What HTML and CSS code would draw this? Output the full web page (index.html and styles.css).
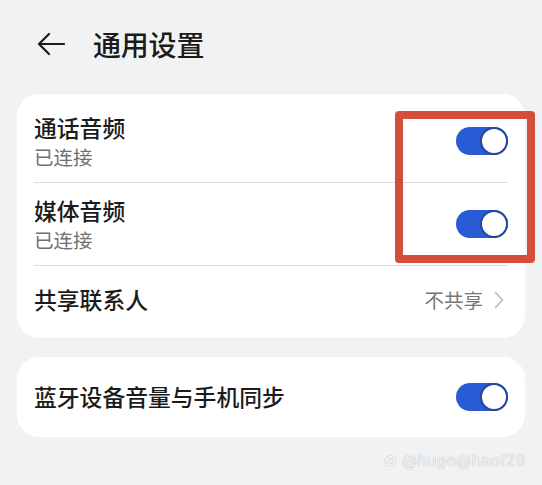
FILE: index.html
```html
<!DOCTYPE html>
<html lang="zh-CN">
<head>
<meta charset="utf-8">
<link rel="stylesheet" href="styles.css">
</head>
<body>
<div class="page">
  <header class="header">
    <svg class="back" width="28" height="24" viewBox="0 0 28 24"><path d="M12 2 L2 12 L12 22 M2 12 H27" fill="none" stroke="#1c1c1c" stroke-width="2.2" stroke-linecap="round" stroke-linejoin="round"/></svg>
    <h1 class="title">通用设置</h1>
  </header>

  <section class="card card-main">
    <div class="row row-two">
      <div class="texts">
        <div class="label">通话音频</div>
        <div class="sub">已连接</div>
      </div>
      <span class="toggle"><span class="knob"></span></span>
    </div>
    <div class="row row-two">
      <div class="texts">
        <div class="label">媒体音频</div>
        <div class="sub">已连接</div>
      </div>
      <span class="toggle"><span class="knob"></span></span>
    </div>
    <div class="row row-one last">
      <div class="label">共享联系人</div>
      <div class="value">不共享<svg class="chev" width="10" height="18" viewBox="0 0 10 18"><path d="M1.5 1.5 L8.5 9 L1.5 16.5" fill="none" stroke="#b8b8b8" stroke-width="1.6" stroke-linecap="round" stroke-linejoin="round"/></svg></div>
    </div>
  </section>

  <section class="card card-second">
    <div class="row row-single last">
      <div class="label">蓝牙设备音量与手机同步</div>
      <span class="toggle"><span class="knob"></span></span>
    </div>
  </section>

  <div class="highlight"></div>
  <div class="watermark">✿ @hugo@haof28</div>
</div>
</body>
</html>
```

FILE: styles.css
```css
html, body {
  margin: 0;
  padding: 0;
  background: #f1f2f4;
}
body {
  font-family: "Noto Sans CJK SC", "Noto Sans", sans-serif;
  color: #1b1b1b;
}
.page {
  position: relative;
  width: 542px;
  height: 485px;
  overflow: hidden;
}
.header {
  display: flex;
  align-items: center;
  height: 88px;
  padding: 0 0 0 37px;
  box-sizing: border-box;
}
.back {
  display: block;
}
.title {
  margin: 0 0 0 28px;
  font-size: 28px;
  font-weight: 500;
  line-height: 1;
  letter-spacing: -0.2px;
}
.card {
  background: #fff;
  border-radius: 22px;
  margin: 0 17px;
}
.card-main {
  margin-top: 6px;
  padding: 6px 0 4px;
}
.card-second {
  margin-top: 19px;
}
.row {
  display: flex;
  align-items: center;
  justify-content: space-between;
  margin: 0 17px;
  border-bottom: 1px solid #dcdcdc;
}
.row.last {
  border-bottom: none;
}
.row-two {
  height: 82px;
}
.row-one {
  height: 68px;
}
.row-single {
  height: 80px;
}
.texts {
  display: flex;
  flex-direction: column;
}
.label {
  font-size: 22.8px;
  font-weight: 500;
  line-height: 30px;
}
.sub {
  font-size: 19.5px;
  line-height: 26px;
  color: #707070;
  margin-top: 1px;
}
.value {
  display: flex;
  align-items: center;
  font-size: 19.5px;
  color: #767676;
  line-height: 26px;
}
.chev {
  margin-left: 11px;
  margin-right: 4px;
}
.toggle {
  position: relative;
  display: block;
  width: 52px;
  height: 28px;
  border-radius: 14px;
  background: #2a5bd7;
  flex: none;
}
.knob {
  position: absolute;
  right: 0;
  top: 0;
  width: 24px;
  height: 24px;
  border-radius: 50%;
  background: #fff;
  border: 2px solid #26469a;
}
.highlight {
  position: absolute;
  left: 395px;
  top: 111px;
  width: 140px;
  height: 152px;
  box-sizing: border-box;
  border: 8px solid #d44e3c;
  border-radius: 4px;
}
.watermark {
  position: absolute;
  left: 384px;
  top: 452px;
  font-family: "DejaVu Sans", sans-serif;
  font-size: 15px;
  color: #f4f4f4;
  text-shadow: 0 0 1px #9a9a9a;
  letter-spacing: 0.3px;
}
```
